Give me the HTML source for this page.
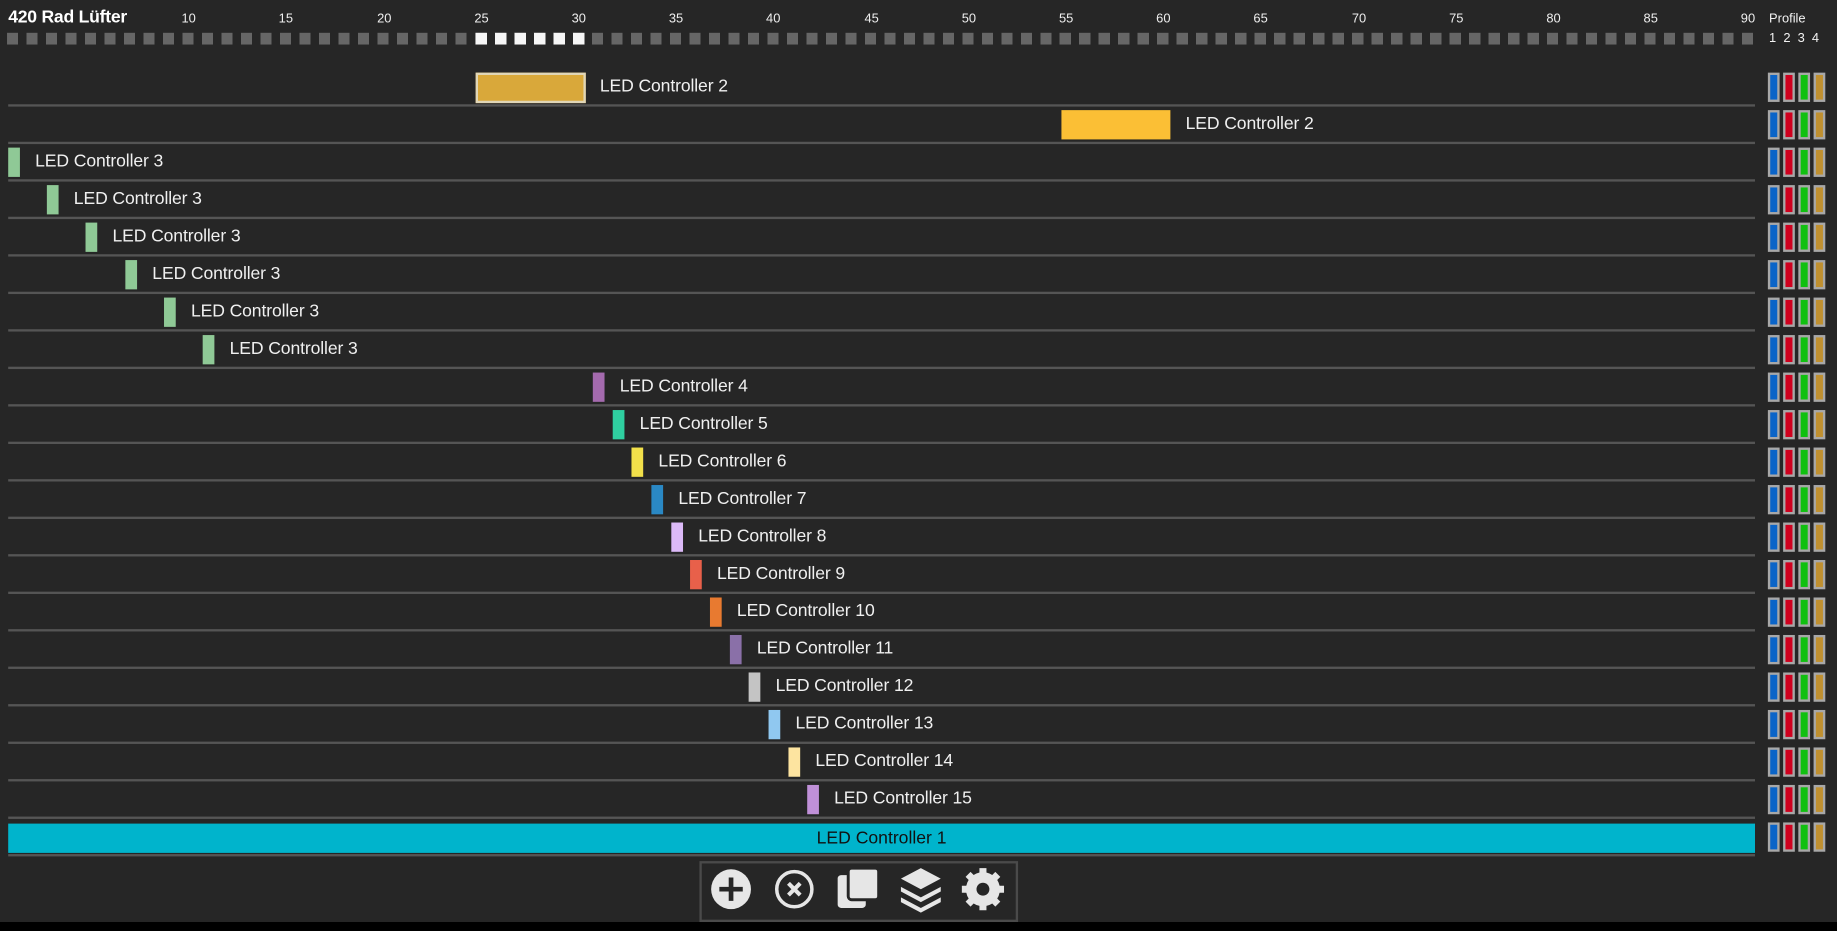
<!DOCTYPE html>
<html><head><meta charset="utf-8">
<style>
html,body{margin:0;padding:0;background:#262626;overflow:hidden;width:1837px;height:931px}
#w{position:absolute;left:0;top:0;width:1568px;height:795px;transform:scale(1.17156);transform-origin:0 0;background:#262626;font-family:"Liberation Sans",sans-serif;color:#f2f2f2}
.a{position:absolute}
.t{position:absolute;font-size:11px;color:#eee;transform:translateX(-50%);top:10px}
.ln{position:absolute;left:7px;width:1491px;height:2px;background:#555}
.bar{position:absolute;height:25px;width:10px}
.lb{position:absolute;font-size:15px;color:#f0f0f0;line-height:20px;letter-spacing:-0.1px}
</style></head><body><div id="w">
<div class="a" style="left:7px;top:6px;font-size:15px;font-weight:bold;color:#fff;letter-spacing:-0.2px">420 Rad Lüfter</div>
<div class="t" style="left:161px">10</div><div class="t" style="left:244px">15</div><div class="t" style="left:328px">20</div><div class="t" style="left:411px">25</div><div class="t" style="left:494px">30</div><div class="t" style="left:577px">35</div><div class="t" style="left:660px">40</div><div class="t" style="left:744px">45</div><div class="t" style="left:827px">50</div><div class="t" style="left:910px">55</div><div class="t" style="left:993px">60</div><div class="t" style="left:1076px">65</div><div class="t" style="left:1160px">70</div><div class="t" style="left:1243px">75</div><div class="t" style="left:1326px">80</div><div class="t" style="left:1409px">85</div><div class="t" style="left:1492px">90</div>
<div class="a" style="left:1510px;top:10px;font-size:11px">Profile</div>
<div class="a" style="left:1510px;top:27px;font-size:11px;word-spacing:3px">1 2 3 4</div>
<div class="a" style="left:6px;top:28px;width:1494px;height:10px;background:repeating-linear-gradient(90deg,#666 0 9.5px,transparent 9.5px 16.64px)"></div>
<div class="a" style="left:405.5px;top:28px;width:99px;height:10px;background:repeating-linear-gradient(90deg,#f6f6f6 0 9.5px,#262626 9.5px 16.64px)"></div>
<div class="a" style="left:0;top:787px;width:1568px;height:8px;background:#000"></div>
<div class="a" style="left:406px;top:62px;width:90px;height:22px;background:#d9a83a;border:2px solid #e0d6b8"></div><div class="lb" style="left:512px;top:64px">LED Controller 2</div>
<div class="a" style="left:906px;top:94px;width:93px;height:25px;background:#fbbf35"></div><div class="lb" style="left:1012px;top:96px">LED Controller 2</div>
<div class="bar" style="left:7px;top:126px;background:#8fc996"></div><div class="lb" style="left:30px;top:128px">LED Controller 3</div>
<div class="bar" style="left:40px;top:158px;background:#8fc996"></div><div class="lb" style="left:63px;top:160px">LED Controller 3</div>
<div class="bar" style="left:73px;top:190px;background:#8fc996"></div><div class="lb" style="left:96px;top:192px">LED Controller 3</div>
<div class="bar" style="left:107px;top:222px;background:#8fc996"></div><div class="lb" style="left:130px;top:224px">LED Controller 3</div>
<div class="bar" style="left:140px;top:254px;background:#8fc996"></div><div class="lb" style="left:163px;top:256px">LED Controller 3</div>
<div class="bar" style="left:173px;top:286px;background:#8fc996"></div><div class="lb" style="left:196px;top:288px">LED Controller 3</div>
<div class="bar" style="left:506px;top:318px;background:#a46aae"></div><div class="lb" style="left:529px;top:320px">LED Controller 4</div>
<div class="bar" style="left:523px;top:350px;background:#2fcfa0"></div><div class="lb" style="left:546px;top:352px">LED Controller 5</div>
<div class="bar" style="left:539px;top:382px;background:#f2e04a"></div><div class="lb" style="left:562px;top:384px">LED Controller 6</div>
<div class="bar" style="left:556px;top:414px;background:#2a88c4"></div><div class="lb" style="left:579px;top:416px">LED Controller 7</div>
<div class="bar" style="left:573px;top:446px;background:#dcbaf8"></div><div class="lb" style="left:596px;top:448px">LED Controller 8</div>
<div class="bar" style="left:589px;top:478px;background:#e8604a"></div><div class="lb" style="left:612px;top:480px">LED Controller 9</div>
<div class="bar" style="left:606px;top:510px;background:#e87a30"></div><div class="lb" style="left:629px;top:512px">LED Controller 10</div>
<div class="bar" style="left:623px;top:542px;background:#8a70a8"></div><div class="lb" style="left:646px;top:544px">LED Controller 11</div>
<div class="bar" style="left:639px;top:574px;background:#c4c4c4"></div><div class="lb" style="left:662px;top:576px">LED Controller 12</div>
<div class="bar" style="left:656px;top:606px;background:#90c8f0"></div><div class="lb" style="left:679px;top:608px">LED Controller 13</div>
<div class="bar" style="left:673px;top:638px;background:#fde4a0"></div><div class="lb" style="left:696px;top:640px">LED Controller 14</div>
<div class="bar" style="left:689px;top:670px;background:#c090d8"></div><div class="lb" style="left:712px;top:672px">LED Controller 15</div>
<div class="a" style="left:7px;top:703px;width:1491px;height:25px;background:#00b4cc;color:#111;font-size:15px;line-height:25px;text-align:center">LED Controller 1</div>
<div class="ln" style="top:89px"></div><div class="ln" style="top:121px"></div><div class="ln" style="top:153px"></div><div class="ln" style="top:185px"></div><div class="ln" style="top:217px"></div><div class="ln" style="top:249px"></div><div class="ln" style="top:281px"></div><div class="ln" style="top:313px"></div><div class="ln" style="top:345px"></div><div class="ln" style="top:377px"></div><div class="ln" style="top:409px"></div><div class="ln" style="top:441px"></div><div class="ln" style="top:473px"></div><div class="ln" style="top:505px"></div><div class="ln" style="top:537px"></div><div class="ln" style="top:569px"></div><div class="ln" style="top:601px"></div><div class="ln" style="top:633px"></div><div class="ln" style="top:665px"></div><div class="ln" style="top:697px"></div><div class="ln" style="top:729px"></div>
<svg class="a" style="left:1506px;top:60px" width="60" height="670">
<defs><g id="pg" stroke="#a8a8a8" stroke-width="2"><rect x="4" y="3" width="8" height="23" fill="#0a64c8"/><rect x="17" y="3" width="8" height="23" fill="#d0001e"/><rect x="30" y="3" width="8" height="23" fill="#10c010"/><rect x="43" y="3" width="8" height="23" fill="#c09030"/></g></defs>
<use href="#pg" y="0"/><use href="#pg" y="32"/><use href="#pg" y="64"/><use href="#pg" y="96"/><use href="#pg" y="128"/><use href="#pg" y="160"/><use href="#pg" y="192"/><use href="#pg" y="224"/><use href="#pg" y="256"/><use href="#pg" y="288"/><use href="#pg" y="320"/><use href="#pg" y="352"/><use href="#pg" y="384"/><use href="#pg" y="416"/><use href="#pg" y="448"/><use href="#pg" y="480"/><use href="#pg" y="512"/><use href="#pg" y="544"/><use href="#pg" y="576"/><use href="#pg" y="608"/><use href="#pg" y="640"/>
</svg>
<div class="a" style="left:597px;top:735px;width:268px;height:48px;border:2px solid #4a4a4a"></div>
<svg class="a" style="left:597px;top:735px" width="272" height="52">
<g transform="translate(27,24)"><circle r="17" fill="#e6e6e6"/><path d="M0-10V10M-10 0H10" stroke="#262626" stroke-width="4"/></g>
<g transform="translate(81,24)"><circle r="15" fill="none" stroke="#e6e6e6" stroke-width="3"/><path d="M-5-5L5 5M5-5L-5 5" stroke="#e6e6e6" stroke-width="3.5"/></g>
<g transform="translate(135,24)" fill="#e6e6e6"><rect x="-17" y="-12" width="24" height="28" rx="3"/><rect x="-8" y="-18" width="26" height="27" rx="3" stroke="#262626" stroke-width="2.5"/></g>
<g transform="translate(189,24)" fill="#e6e6e6"><path d="M0-18L17-9L0 0L-17-9Z"/><path d="M-17-2L0 7L17-2L17 2L0 11L-17 2Z"/><path d="M-17 7L0 16L17 7L17 11L0 20L-17 11Z"/></g>
<g transform="translate(242,24)"><circle r="11" fill="none" stroke="#e6e6e6" stroke-width="7"/><g stroke="#e6e6e6" stroke-width="6"><path d="M0-18V18M-18 0H18M-12.7-12.7L12.7 12.7M12.7-12.7L-12.7 12.7"/></g><circle r="5.5" fill="#262626"/></g>
</svg>
</div></body></html>
